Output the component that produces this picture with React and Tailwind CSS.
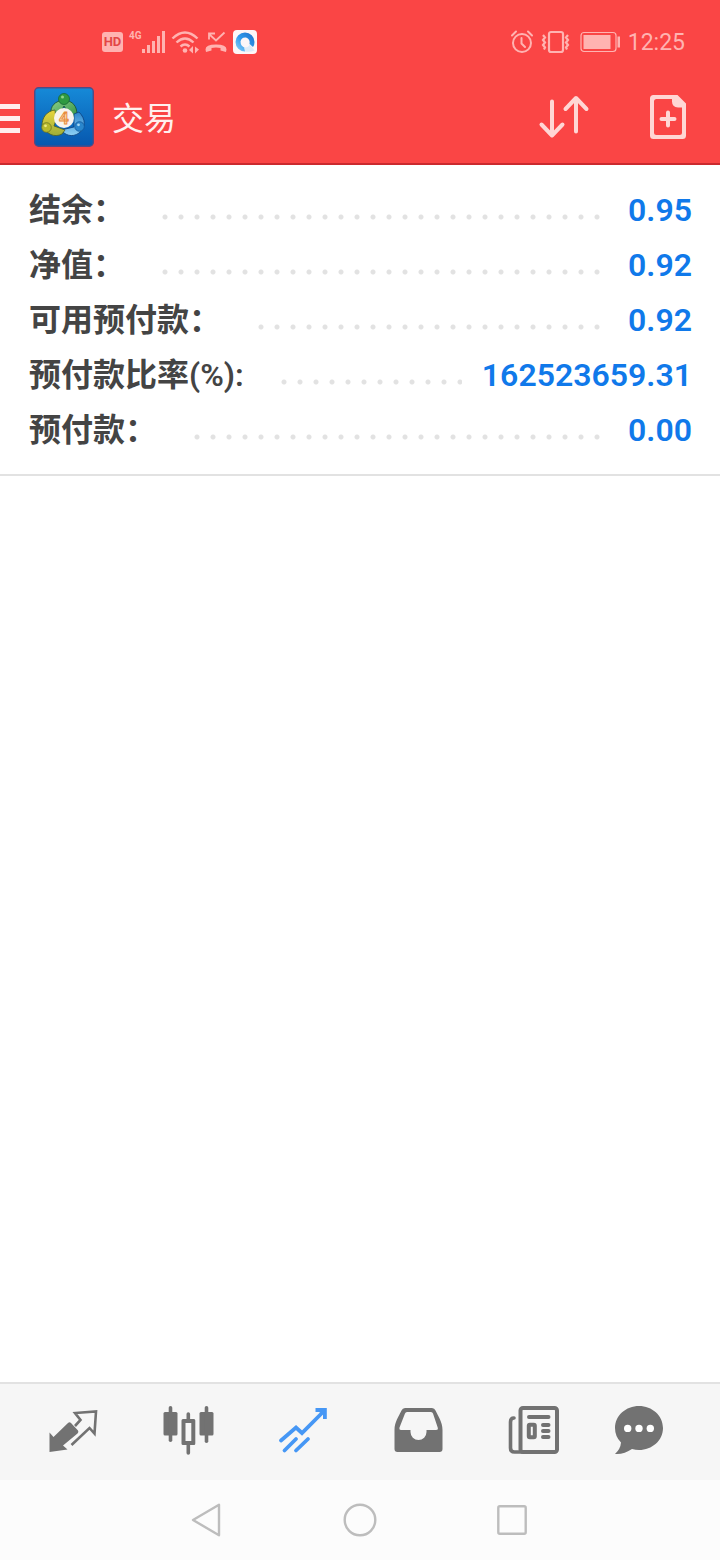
import { useState } from 'react';

const ACCOUNT = [
  { label: '结余：', value: '0.95' },
  { label: '净值：', value: '0.92' },
  { label: '可用预付款：', value: '0.92' },
  { label: '预付款比率(%):', value: '162523659.31' },
  { label: '预付款：', value: '0.00' },
];

const TABS = [
  { id: 'quotes', name: '行情', icon: QuotesIcon },
  { id: 'charts', name: '图表', icon: ChartsIcon },
  { id: 'trade', name: '交易', icon: TradeIcon },
  { id: 'history', name: '历史', icon: HistoryIcon },
  { id: 'news', name: '新闻', icon: NewsIcon },
  { id: 'chat', name: '聊天', icon: ChatIcon },
];

export default function App() {
  const [tab, setTab] = useState('trade');

  return (
    <div className="flex min-h-screen flex-col bg-white font-['Roboto','Noto_Sans_CJK_SC',sans-serif]">
      <header className="border-b-2 border-[#cb2a2e] bg-[#fa4545]">
        <StatusBar />
        <div className="flex h-[90px] items-center pr-7 pb-0.5">
          <button aria-label="菜单" className="flex flex-col gap-[7px] pt-0.5">
            <span className="h-[5px] w-5 bg-[#ffeeee]" />
            <span className="h-[5px] w-5 bg-[#ffeeee]" />
            <span className="h-[5px] w-5 bg-[#ffeeee]" />
          </button>
          <AppLogo />
          <h1 className="ml-[18px] flex-1 pt-1 text-[32px] leading-10 text-[#fff0ee]">交易</h1>
          <div className="flex gap-[52px] text-[#ffd6d4]">
            <button aria-label="排序">
              <SortIcon />
            </button>
            <button aria-label="新订单">
              <NewOrderIcon />
            </button>
          </div>
        </div>
      </header>

      <main className="flex-1">
        <dl className="border-b-2 border-[#e2e2e2] pt-[17px] pr-7 pb-[17px] pl-[29px] text-[32px]">
          {ACCOUNT.map((row) => (
            <div key={row.label} className="flex h-[55px] items-center">
              <dt className="font-semibold text-[#444444]">{row.label}</dt>
              <div className="mr-5 ml-8 h-4 flex-1 translate-y-[7px] bg-[radial-gradient(circle,#e2e2e2_2px,transparent_3px)] bg-[length:16px_16px] bg-repeat-x" />
              <dd className="font-semibold text-[#1079ea]">{row.value}</dd>
            </div>
          ))}
        </dl>
      </main>

      <nav className="flex h-[98px] border-t-2 border-[#e2e2e2] bg-[#f6f6f6] px-[15px]">
        {TABS.map(({ id, name, icon: Icon }) => (
          <button
            key={id}
            aria-label={name}
            onClick={() => setTab(id)}
            className={`flex flex-1 justify-center pt-5 ${tab === id ? 'text-[#4697f5]' : 'text-[#727272]'}`}
          >
            <Icon />
          </button>
        ))}
      </nav>

      <SystemBar />
    </div>
  );
}

function StatusBar() {
  return (
    <div className="flex h-[73px] items-center justify-between pt-[11px] pr-[35px] pl-[102px] text-[#ffb3b1]">
      <div className="flex items-center gap-1.5">
        <span className="flex h-5 w-[21px] items-center justify-center rounded-[3px] bg-[#ffb3b1] text-[13px] font-bold text-[#e34646]">HD</span>
        <div className="flex h-6 w-9 items-start">
          <span className="w-3 text-[10px] leading-3 font-bold">4G</span>
          <svg width="24" height="24" viewBox="0 0 24 24" fill="currentColor">
            <rect x="1" y="19" width="3" height="4" />
            <rect x="6" y="15" width="3" height="8" />
            <rect x="11" y="11" width="3" height="12" />
            <rect x="16" y="6" width="3" height="17" />
            <rect x="21" y="1" width="3" height="22" />
          </svg>
        </div>
        <svg width="28" height="24" viewBox="0 0 28 24" fill="none" stroke="currentColor" strokeWidth="2.4">
          <path d="M1.500 8.500Q14 -3.500 26.500 8.500M5.500 12.500Q14 4.500 22.500 12.500M9.500 16.500Q14 12.500 18.500 16.500" />
          <circle cx="14" cy="20.500" r="2.300" fill="currentColor" stroke="none" />
          <path d="M18 20l4-4v7.500zM28 19.500l-4-3v7z" fill="currentColor" stroke="none" />
        </svg>
        <svg width="22" height="24" viewBox="0 0 22 24" fill="none" stroke="currentColor" strokeWidth="1.800">
          <path d="M19.500 2.500L11 10.500L4 4M4 9.500V3.500H10" />
          <path d="M0.500 19.500Q0.500 14.500 11 14.500Q21.500 14.500 21.500 19.500L21 22L15.500 20.500V18Q11 16.800 6.500 18V20.500L1 22Z" fill="currentColor" stroke="none" />
        </svg>
        <BrowserIcon />
      </div>
      <div className="flex items-center gap-2">
        <svg width="22" height="24" viewBox="0 0 22 24" fill="none" stroke="currentColor" strokeWidth="2">
          <circle cx="11" cy="13" r="9" />
          <path d="M10.500 8V13.500L14 17M1 5.500L5 1.500M21 5.500L17 1.500" strokeLinecap="round" />
        </svg>
        <svg width="30" height="24" viewBox="0 0 30 24" fill="none" stroke="currentColor" strokeWidth="2.200">
          <rect x="8" y="2" width="14" height="20" rx="2" />
          <path d="M2 5L4 7.500L2 10L4 12.500L2 15L4 17.500L3 19.500M27 5L25 7.500L27 10L25 12.500L27 15L25 17.500L26 19.500" />
        </svg>
        <svg width="41" height="24" viewBox="0 0 41 24">
          <rect x="2" y="2.500" width="35" height="19" rx="3" fill="none" stroke="currentColor" strokeWidth="1.200" />
          <rect x="4.500" y="5" width="27" height="14" fill="currentColor" />
          <rect x="38.500" y="6.500" width="2.500" height="11" fill="currentColor" />
        </svg>
        <time className="pt-0.5 text-[23px] leading-8">12:25</time>
      </div>
    </div>
  );
}

function BrowserIcon() {
  return (
    <svg width="24" height="24" viewBox="0 0 24 24">
      <defs>
        <linearGradient id="ring" x1="0" y1="1" x2="1" y2="0">
          <stop offset="0" stopColor="#8fd3f8" />
          <stop offset="0.500" stopColor="#2f97ea" />
          <stop offset="1" stopColor="#1e6fc9" />
        </linearGradient>
      </defs>
      <rect width="24" height="24" rx="4" fill="#fdf6f7" />
      <path d="M12 21.500A9.500 9.500 0 1 1 21.500 12Q21.500 15 20 17L16.500 14Q17.500 9 13 7.500Q8.500 7 7.500 11.500Q7.500 16 12 18Z" fill="url(#ring)" />
      <path d="M11 17.500Q15 18 17 14.500L21.500 20.500Q17 22.500 12 21.500Z" fill="#dcebf8" />
    </svg>
  );
}

function AppLogo() {
  return (
    <svg className="ml-3.5" width="60" height="60" viewBox="0 0 60 60">
      <defs>
        <linearGradient id="tile" x1="0" y1="0" x2="0" y2="1">
          <stop offset="0" stopColor="#168ad8" />
          <stop offset="1" stopColor="#0757ae" />
        </linearGradient>
        <linearGradient id="green" x1="0" y1="0" x2="1" y2="1">
          <stop offset="0" stopColor="#8fd08a" />
          <stop offset="1" stopColor="#2b8f3f" />
        </linearGradient>
        <linearGradient id="yellow" x1="0" y1="0" x2="0" y2="1">
          <stop offset="0" stopColor="#e8d53c" />
          <stop offset="1" stopColor="#9fae3a" />
        </linearGradient>
        <linearGradient id="blue" x1="0" y1="0" x2="0" y2="1">
          <stop offset="0" stopColor="#2c86cc" />
          <stop offset="1" stopColor="#8ed0f5" />
        </linearGradient>
      </defs>
      <rect x="0.700" y="0.700" width="58.600" height="58.600" rx="4" fill="url(#tile)" stroke="#524a84" strokeWidth="1.400" />
      <path d="M30 13C21 14 16 19 17 27L24 30L30 19L38 32L43 28C43 19 39 14 30 13Z" fill="url(#green)" stroke="#174f2c" strokeWidth="0.800" />
      <path d="M45 25C52 32 52 41 45 46C38 51 31 48 27 43L40 40L40 27Z" fill="url(#blue)" stroke="#0b3f7c" strokeWidth="0.800" />
      <path d="M21 23C13 24 8 30 8 39C13 47 20 51 28 47L31 43L20 39L22 33Z" fill="url(#yellow)" stroke="#4c5e25" strokeWidth="0.800" />
      <circle cx="30" cy="12" r="5.500" fill="#2f9a40" stroke="#176a31" strokeWidth="0.800" />
      <circle cx="28.500" cy="10" r="1.500" fill="#8fd386" />
      <circle cx="12.500" cy="40.500" r="4.800" fill="#b8ba2c" stroke="#6c7423" strokeWidth="0.800" />
      <circle cx="11.500" cy="38.800" r="1.400" fill="#eeea80" />
      <circle cx="45.500" cy="39.500" r="4.800" fill="#2a86cc" stroke="#10559a" strokeWidth="0.800" />
      <circle cx="44.500" cy="37.800" r="1.400" fill="#a5d8f5" />
      <circle cx="30" cy="31" r="10" fill="#f8f4ee" />
      <text x="30" y="37" textAnchor="middle" fontFamily="Roboto, sans-serif" fontSize="17" fontWeight="bold" fill="#fbd9a8" stroke="#e88b3c" strokeWidth="0.900">
        4
      </text>
    </svg>
  );
}

function SortIcon() {
  return (
    <svg width="56" height="48" viewBox="0 0 56 48" fill="none" stroke="currentColor" strokeWidth="4" strokeLinecap="round" strokeLinejoin="round">
      <path d="M16 8.500V42M5.500 31.500L16 42.500L26.500 31.500" />
      <path d="M40 38.500V5.500M29.500 16L40 5L50.500 16" />
    </svg>
  );
}

function NewOrderIcon() {
  return (
    <svg width="48" height="48" viewBox="0 0 48 48" fill="currentColor">
      <path
        fillRule="evenodd"
        d="M9.500 2H33.500L42 10.500V42.500Q42 46 38.500 46H9.500Q6 46 6 42.500V5.500Q6 2 9.500 2ZM12.500 6Q10 6 10 8.500V39.500Q10 42 12.500 42H35.500Q38 42 38 39.500V14.500H34Q28 14 28 8.500V6Z"
      />
      <path d="M24 19.500V32.500M17.500 26H30.500" stroke="currentColor" strokeWidth="4" strokeLinecap="round" />
    </svg>
  );
}

function QuotesIcon() {
  return (
    <svg width="75" height="56" viewBox="0 0 75 56" fill="none" stroke="currentColor" strokeWidth="2.600">
      <path d="M14.500 28.500L18.500 33L33 19Q34.500 17.500 36 19L43 26.500Q44 28 42.500 29.500L28 41.500L32.500 45.500L14.500 48Z" fill="currentColor" stroke="none" />
      <path d="M40 22L45.500 16L40 9L61 7.500L59.500 29.500L54.500 24L36.500 41" />
    </svg>
  );
}

function ChartsIcon() {
  return (
    <svg width="75" height="56" viewBox="0 0 75 56" fill="currentColor">
      <rect x="13.500" y="8" width="14" height="23.500" rx="1.500" />
      <rect x="18.700" y="2" width="3.600" height="36" rx="1.800" />
      <rect x="49.500" y="8" width="14" height="23.500" rx="1.500" />
      <rect x="54.700" y="2" width="3.600" height="37" rx="1.800" />
      <path fillRule="evenodd" d="M36.500 15V10Q36.500 8.300 38.300 8.300T40.100 10V15H44Q45.300 15 45.300 16.500V39.500Q45.300 41 44 41H40.100V49Q40.100 50.800 38.300 50.800T36.500 49V41H33Q31.500 41 31.500 39.500V16.500Q31.500 15 33 15ZM35.500 19V37H41.300V19Z" />
    </svg>
  );
}

function TradeIcon() {
  return (
    <svg width="75" height="56" viewBox="0 0 75 56" fill="none" stroke="currentColor" strokeWidth="3.800" strokeLinecap="round">
      <path d="M16 36.500L31 23.500L37 29L58.500 7.500" />
      <path d="M50.500 4H61.800V15H58V10L54 8H50.500Z" fill="currentColor" stroke="none" />
      <path d="M19.500 46.500L31 35M31 46.500L43 35" />
    </svg>
  );
}

function HistoryIcon() {
  return (
    <svg width="75" height="56" viewBox="0 0 75 56" fill="currentColor">
      <path
        fillRule="evenodd"
        d="M25 4H52Q54.500 4 55.500 6.500C58 12 62.500 18 62.500 26V45Q62.500 48 59.500 48H17.500Q14.500 48 14.500 45V26C14.500 18 19 12 21.500 6.500Q22.500 4 25 4ZM27 8Q25.500 8 25 9.500L19.500 23.500Q19 26 21 26H30.500V28A8 8 0 0 0 46.500 28V26H56Q58.500 26 57.700 23.500L53 9.500Q52.500 8 51 8Z"
      />
    </svg>
  );
}

function NewsIcon() {
  return (
    <svg width="75" height="56" viewBox="0 0 75 56" fill="none" stroke="currentColor" strokeWidth="4" strokeLinecap="round">
      <rect x="25.500" y="4" width="36.500" height="44" rx="2.500" />
      <path d="M19 14Q15.500 14 15.500 18V44Q15.500 48 19.500 48H27" strokeWidth="3.600" />
      <path d="M34 13H53.500M48 21H53.500M48 27H53.500M48 33H53.500" />
      <rect x="33.800" y="20.800" width="6" height="12.400" rx="1" />
    </svg>
  );
}

function ChatIcon() {
  return (
    <svg width="75" height="56" viewBox="0 0 75 56" fill="currentColor">
      <path d="M29 2C42 2 53 11.500 53 24S42 46 29 46Q25.500 46 22 45C17 48.500 11 50.500 5 50Q10.500 45 11 38.500Q5 32.500 5 24C5 11.500 16 2 29 2Z" />
      <g fill="#ffffff">
        <circle cx="17.700" cy="24.400" r="3.700" />
        <circle cx="29" cy="24.400" r="3.700" />
        <circle cx="40.300" cy="24.400" r="3.700" />
      </g>
    </svg>
  );
}

function SystemBar() {
  return (
    <div className="flex h-20 items-center justify-center bg-[#fcfcfc] text-[#bdbdbd]">
      <button aria-label="返回" className="flex w-[152px] justify-center">
        <svg width="40" height="40" viewBox="0 0 40 40" fill="none" stroke="currentColor" strokeWidth="2.400" strokeLinejoin="round">
          <path d="M5 20L31 4.800V35.200Z" />
        </svg>
      </button>
      <button aria-label="主屏幕" className="flex w-[152px] justify-center">
        <svg width="40" height="40" viewBox="0 0 40 40" fill="none" stroke="currentColor" strokeWidth="2.400">
          <circle cx="20" cy="20" r="15.300" />
        </svg>
      </button>
      <button aria-label="最近任务" className="flex w-[152px] justify-center">
        <svg width="40" height="40" viewBox="0 0 40 40" fill="none" stroke="currentColor" strokeWidth="2.400">
          <rect x="6.300" y="6.300" width="27.400" height="27.400" rx="1.500" />
        </svg>
      </button>
    </div>
  );
}
